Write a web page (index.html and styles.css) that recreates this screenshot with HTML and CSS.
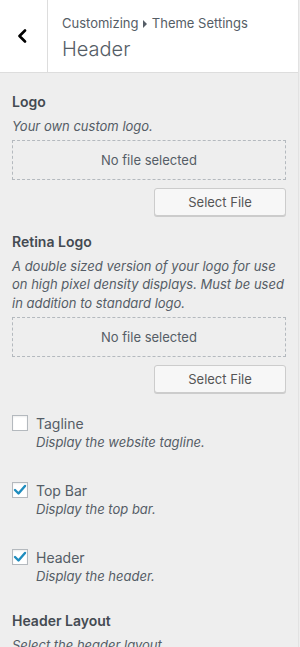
FILE: index.html
```html
<!DOCTYPE html>
<html lang="en">
<head>
    <meta charset="UTF-8">
    <meta name="viewport" content="width=device-width, initial-scale=1.0">
    <title>Customizing - Header</title>
    <link rel="stylesheet" href="styles.css">
</head>
<body>
    <div class="panel">
        <!-- Section header -->
        <div class="section-head">
            <button class="back-btn" aria-label="Back">
                <svg width="10" height="14" viewBox="0 0 10 14">
                    <polyline points="8,1.5 2.5,7 8,12.5" fill="none" stroke="#000" stroke-width="2.6" stroke-linecap="round" stroke-linejoin="round"/>
                </svg>
            </button>
            <div class="head-titles">
                <div class="crumb">Customizing <span class="crumb-arrow"></span> Theme Settings</div>
                <div class="head-name">Header</div>
            </div>
        </div>

        <!-- Controls -->
        <div class="controls">
            <div class="control">
                <div class="control-title">Logo</div>
                <div class="control-desc">Your own custom logo.</div>
                <div class="placeholder">No file selected</div>
                <div class="actions"><button class="btn">Select File</button></div>
            </div>

            <div class="control">
                <div class="control-title">Retina Logo</div>
                <div class="control-desc">A double sized version of your logo for use on high pixel density displays. Must be used in addition to standard logo.</div>
                <div class="placeholder">No file selected</div>
                <div class="actions"><button class="btn">Select File</button></div>
            </div>

            <div class="control check-control first-check">
                <label class="check-row">
                    <span class="box"></span>
                    <span class="check-label">Tagline</span>
                </label>
                <div class="control-desc check-desc">Display the website tagline.</div>
            </div>

            <div class="control check-control">
                <label class="check-row">
                    <span class="box">
                        <svg width="14" height="12" viewBox="0 0 14 12"><polyline points="2,6 5.5,9.5 12,2" fill="none" stroke="#1e8cbe" stroke-width="2.4" stroke-linecap="round" stroke-linejoin="round"/></svg>
                    </span>
                    <span class="check-label">Top Bar</span>
                </label>
                <div class="control-desc check-desc">Display the top bar.</div>
            </div>

            <div class="control check-control">
                <label class="check-row">
                    <span class="box">
                        <svg width="14" height="12" viewBox="0 0 14 12"><polyline points="2,6 5.5,9.5 12,2" fill="none" stroke="#1e8cbe" stroke-width="2.4" stroke-linecap="round" stroke-linejoin="round"/></svg>
                    </span>
                    <span class="check-label">Header</span>
                </label>
                <div class="control-desc check-desc">Display the header.</div>
            </div>

            <div class="control layout-control">
                <div class="control-title">Header Layout</div>
                <div class="control-desc">Select the header layout.</div>
            </div>
        </div>
    </div>
</body>
</html>
```

FILE: styles.css
```css
/* General Styling */
body {
    margin: 0;
    overflow: hidden;
    font-family: Inter, Roboto, 'Liberation Sans', sans-serif;
    background-color: #eeeeee;
    color: #555d66;
    height: 647px;
}

.panel {
    width: 298px;
    height: 647px;
    background-color: #eeeeee;
    border-right: 1px solid #e2e2e2;
}

/* Section header */
.section-head {
    display: flex;
    height: 72px;
    background-color: #fff;
    border-bottom: 1px solid #dddddd;
}

.back-btn {
    width: 48px;
    height: 72px;
    padding: 0;
    border: none;
    border-right: 1px solid #dddddd;
    background: #fff;
    display: flex;
    align-items: center;
    justify-content: center;
    padding-right: 4px;
}

.head-titles {
    padding: 14px 0 0 14px;
}

.crumb {
    font-size: 13px;
    line-height: 18px;
    color: #555d66;
}

.crumb-arrow {
    display: inline-block;
    width: 0;
    height: 0;
    border-top: 4px solid transparent;
    border-bottom: 4px solid transparent;
    border-left: 4px solid #555d66;
    margin: 0 1px 0 1px;
    vertical-align: 0;
}

.head-name {
    font-size: 20px;
    font-weight: 300;
    line-height: 26px;
    margin-top: 4px;
    color: #555d66;
}

/* Controls */
.controls {
    padding: 18px 12px 0 12px;
}

.control {
    margin-bottom: 15px;
}

.control-title {
    font-size: 14px;
    font-weight: 600;
    line-height: 21px;
    color: #444a52;
}

.control-desc {
    font-size: 13px;
    font-style: italic;
    line-height: 18.2px;
    margin-top: 5px;
    color: #555d66;
}

.placeholder {
    margin-top: 5px;
    height: 38px;
    border: 1px dashed #b4b9be;
    display: flex;
    align-items: center;
    justify-content: center;
    font-size: 13px;
    color: #555d66;
}

.actions {
    display: flex;
    justify-content: flex-end;
    margin-top: 8px;
}

.btn {
    width: 132px;
    height: 28px;
    padding: 0 10px;
    font-family: Inter, Roboto, 'Liberation Sans', sans-serif;
    font-size: 13px;
    color: #555;
    background-color: #f7f7f7;
    border: 1px solid #cccccc;
    border-radius: 3px;
    box-shadow: 0 1px 0 #cccccc;
}

/* Checkbox controls */
.check-control {
    margin-bottom: 29.8px;
}

.first-check {
    margin-top: 20.7px;
}

.check-row {
    display: flex;
    align-items: center;
    height: 19px;
}

.box {
    width: 16px;
    height: 16px;
    box-sizing: border-box;
    border: 1px solid #b4b9be;
    background-color: #fff;
    box-shadow: inset 0 1px 2px rgba(0, 0, 0, 0.07);
    display: flex;
    align-items: center;
    justify-content: center;
    margin-right: 8px;
}

.check-label {
    font-size: 14px;
    line-height: 19px;
    color: #555d66;
}

.check-desc {
    margin-top: 0;
    padding-left: 24px;
}

.layout-control {
    margin-top: -5px;
}
```
